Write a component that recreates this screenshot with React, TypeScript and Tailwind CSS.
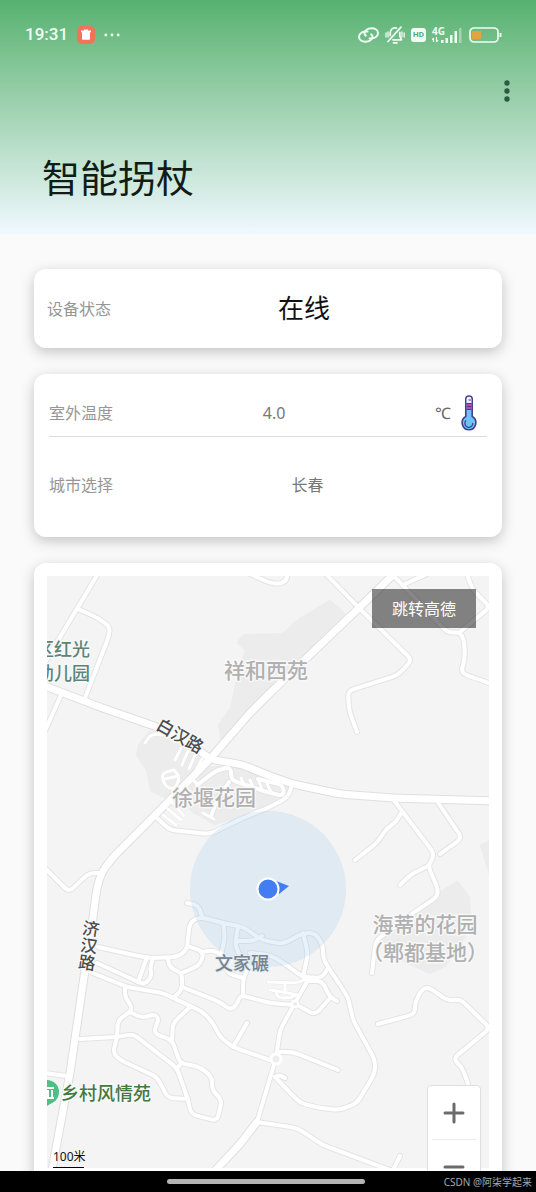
import type { ReactNode } from 'react';

const text = "font-['Noto_Sans','Noto_Sans_CJK_SC',sans-serif]";

// Built-up blocks, drawn under the roads
const blocks = [
  '330,602 344,615 303,660 260,707 222,739 220,725 232,708 238,680 247,650 239,642 245,636 283,635 300,620',
  '140,745 150,733 167,733 195,748 207,758 172,800 152,790 148,770 138,755',
  '207,768 240,768 270,778 288,788 284,798 250,812 215,823 195,812 182,800',
  '457,883 468,898 470,927 445,965 430,972 403,960 384,940 400,925 427,902',
  '482,846 490,842 490,872',
];

const mainRoads = [
  '40,684 97,706 157,727 187,741 210,759 243,765 270,776 293,784 340,794 393,798 495,801',
  '396,572 359,608 270,693 250,713 210,759 168,802 113,857 102,872 97,887 92,925 85,970 70,1073 51,1175',
  '257,1122 240,1144 212,1174',
];

const roads = [
  '99,572 78,607 57,642 44,664',
  '78,609 98,618 110,627 109,636 85,698',
  '61,695 44,733',
  '44,867 69,892 89,873 102,873',
  '324,572 359,608 412,660 398,675 348,691 349,710 357,732',
  '390,572 448,633 460,632 464,640 465,657 461,673 494,685',
  '405,584 427,574',
  '466,572 473,590 490,607 460,632',
  '248,573 270,583 280,584 287,580 287,572',
  '393,799 433,852 433,858 428,866 438,889 437,897 410,915 392,929 376,940 372,973',
  '402,812 395,823 387,828 377,843 355,860',
  '428,866 410,875 400,885',
  '437,801 462,838 440,854',
  '187,903 198,905 202,916',
  '98,947 143,957 153,958 177,957 187,950 188,938 190,922 200,917 223,923 243,927 262,940 283,944 303,933 315,933 323,945 323,958 328,967 348,997 353,1020 375,1060 375,1073 357,1103 340,1110 320,1108 300,1103 275,1077',
  '303,933 308,953 303,977',
  '223,923 225,937 221,955',
  '238,927 235,945 247,970',
  '237,941 253,941 262,936',
  '243,978 227,973 222,955 213,950 203,952',
  '250,953 270,955 282,962 303,977 322,978 328,968',
  '308,981 322,981 330,997 337,1001',
  '330,998 315,1015 297,1005',
  '308,980 295,1003 280,1030 276,1058 257,1122',
  '257,1122 297,1128 323,1145 395,1172',
  '400,1156 392,1172',
  '277,1052 293,1052 338,1070',
  '270,1060 233,1047 220,1037 213,1023 203,1012 190,1006 163,993 127,987 88,971',
  '233,1047 247,1023',
  '97,963 145,985 152,975 150,968 153,958',
  '147,957 138,982',
  '168,959 170,968 182,973 182,990 173,998',
  '182,973 200,965 204,952 188,946',
  '182,987 220,1002 230,1010 237,1005 240,995 270,1003 295,1005',
  '243,995 243,980 247,970',
  '125,988 125,997 132,1007 130,1012 118,1020 117,1037 113,1053 120,1060 157,1077 168,1098 188,1099',
  '80,1039 117,1037 133,1034 177,1068 188,1100 191,1114 217,1121 222,1100 212,1090 212,1077 200,1067 180,1063 172,1040 155,1034 155,1027 159,1020 155,1014 142,1018 130,1012',
  '172,1040 173,1023 190,1007',
  '176,1069 181,1064',
  '275,1077 279,1075 285,1078',
  '44,1073 67,1076',
  '378,1024 415,1014 415,1002 423,988 430,988 448,1001 460,999 490,1028 453,1059 462,1067 468,1084',
  '157,818 170,830 210,834 243,818 270,807 288,797 292,785',
  '197,785 217,770 231,767 231,780 270,793 284,796 283,785 258,779',
  '229,782 217,800 211,816',
];

const lanes = [
  '145,743 151,734 162,735',
  '181,748 175,760',
  '188,751 182,765',
  '195,755 189,769',
  '202,759 194,774',
  '174,770 162,773 163,782 168,788 175,789 180,777 174,770',
  '165,779 178,776',
  '163,815 176,825',
  '168,809 181,820',
  '173,803 184,816',
  '203,813 214,819',
  '190,778 199,785',
  '241,778 244,784',
  '250,780 253,787',
  '259,781 262,790',
  '267,784 271,792',
  '268,982 297,983 306,979',
  '270,990 283,992 297,995',
  '285,984 285,992',
  '276,992 278,998 290,998 296,995',
];

const CORNER = 6;

// Turns "x,y x,y ..." into a path whose corners are rounded off
function roadPath(line: string) {
  const pts = line.split(' ').map((p) => p.split(',').map(Number));
  const towards = (a: number[], b: number[]) => {
    const len = Math.hypot(b[0] - a[0], b[1] - a[1]) || 1;
    const t = Math.min(CORNER, len / 2) / len;
    return `${a[0] + (b[0] - a[0]) * t} ${a[1] + (b[1] - a[1]) * t}`;
  };
  let d = `M${pts[0].join(' ')}`;
  for (let i = 1; i < pts.length - 1; i++) {
    d += ` L${towards(pts[i], pts[i - 1])} Q${pts[i].join(' ')} ${towards(pts[i], pts[i + 1])}`;
  }
  return `${d} L${pts[pts.length - 1].join(' ')}`;
}

function RoadLayer({ lines, width, color }: { lines: string[]; width: number; color: string }) {
  return (
    <g fill="none" stroke={color} strokeWidth={width} strokeLinecap="round" strokeLinejoin="round">
      {lines.map((line) => (
        <path key={line} d={roadPath(line)} />
      ))}
    </g>
  );
}

function MapView() {
  return (
    <svg
      viewBox="47 576 442 592"
      className="block w-full bg-[#f4f4f4] font-['Noto_Sans_CJK_SC',sans-serif] font-medium"
      role="img"
      aria-label="地图"
    >
      {blocks.map((points) => (
        <polygon key={points} points={points} fill="#ececec" stroke="#ececec" strokeWidth="4" strokeLinejoin="round" />
      ))}
      <RoadLayer lines={lanes} width={4} color="#e6e6e6" />
      <RoadLayer lines={roads} width={6} color="#e4e4e4" />
      <RoadLayer lines={mainRoads} width={9} color="#dfdfdf" />
      <RoadLayer lines={lanes} width={3} color="#fff" />
      <RoadLayer lines={roads} width={4} color="#fff" />
      <RoadLayer lines={mainRoads} width={7} color="#fff" />
      <circle cx="276" cy="1059" r="5" fill="#ededed" stroke="#fff" strokeWidth="3" />
      <circle cx="295" cy="1004" r="3" fill="#ededed" stroke="#fff" strokeWidth="2" />

      <circle cx="268" cy="889" r="78" fill="#9fcbee" fillOpacity="0.25" />

      <g stroke="#f8f8f8" strokeWidth="3" strokeLinejoin="round" paintOrder="stroke">
        <g fontSize="21" fill="#b0b0b0" textAnchor="middle">
          <text x="266" y="678">祥和西苑</text>
          <text x="214" y="805">徐堰花园</text>
          <text x="425" y="932">海蒂的花园</text>
          <text x="425" y="960">（郫都基地）</text>
        </g>
        <g fontSize="18" fill="#5b8577">
          <text x="36" y="656">区红光</text>
          <text x="36" y="680">幼儿园</text>
        </g>
        <text x="215" y="970" fontSize="18" fill="#77858f" stroke="#e4edf5" strokeWidth="2">
          文家碾
        </text>
        <g fontSize="17" fill="#4c4c4c" textAnchor="middle">
          <text transform="translate(180 736) rotate(30)" y="6">白汉路</text>
          <text transform="translate(91 929) rotate(8)" y="6">济</text>
          <text transform="translate(89 946) rotate(8)" y="6">汉</text>
          <text transform="translate(87 963) rotate(8)" y="6">路</text>
        </g>
        <text x="61" y="1100" fontSize="18" fill="#44783f">乡村风情苑</text>
      </g>

      <path d="M47 1106l9-6-9-3z" fill="#4dc084" />
      <circle cx="47" cy="1092" r="12" fill="#4dc084" />
      <path d="M40 1088h14M48 1090v7M52 1090v7M40 1098h14" stroke="#fff" strokeWidth="2" />

      <path d="M276 881l13 5-10 8z" fill="#437df3" />
      <circle cx="268" cy="889" r="10.500" fill="#437df3" stroke="#fff" strokeWidth="2" />

      <text x="53" y="1161" fontSize="12" fill="#111" className="font-['Noto_Sans','Noto_Sans_CJK_SC',sans-serif] font-normal">
        100米
      </text>
      <path d="M53 1167.5h31" stroke="#000" />
    </svg>
  );
}

function StatusBar() {
  return (
    <div className="flex h-[69px] items-center justify-between pr-[34px] pl-[25px] text-[#effdf3]">
      <div className="flex items-center gap-[9px]">
        <span className="font-['Roboto',sans-serif] text-[17px] font-medium">19:31</span>
        <svg width="18" height="18" viewBox="0 0 18 18">
          <rect width="18" height="18" rx="5" fill="#f1735a" />
          <path d="M4 4.500h3V3.500h4v1h3v1.800H4zM5 6.300h8v6.700q0 .8-.8.8H5.800q-.8 0-.8-.8z" fill="#fff" />
        </svg>
        <svg width="16" height="4" viewBox="0 0 16 4" fill="currentColor">
          <circle cx="1.800" cy="2" r="1.400" />
          <circle cx="8" cy="2" r="1.400" />
          <circle cx="14.200" cy="2" r="1.400" />
        </svg>
      </div>
      <div className="flex items-center gap-[6px]">
        <svg width="21" height="16" viewBox="0 0 21 16" fill="none" stroke="currentColor" strokeWidth="2" strokeLinecap="round">
          <path d="M9.500 4.600C4.500 4 1 6.500 1 9.800C1 13 4 14.800 7.500 14.800C11.500 14.800 14.500 12.500 14.500 9.800C14.500 8.800 14 8 13.200 7.400" />
          <path d="M11.500 11.400C16.500 12 20 9.500 20 6.200C20 3 17 1.200 13.500 1.200C9.500 1.200 6.500 3.500 6.500 6.200C6.500 7.200 7 8 7.800 8.600" />
        </svg>
        <svg width="20" height="18" viewBox="0 0 20 18" fill="none" stroke="currentColor" strokeWidth="1.800" strokeLinecap="round" strokeLinejoin="round">
          <path d="M11.500 2.200C8 1.200 5.200 3.500 5.200 7v2.500M14.800 6.500v3.500l1.700 3.800H8" />
          <path d="M3 15.500L16 1.200" />
          <path d="M8.500 16.800h3.500" />
          <path d="M1 7v4M3 6v5M17 6v5M19.200 7v4" strokeWidth="1.300" />
        </svg>
        <span className="flex h-[14px] w-[15px] items-center justify-center rounded-[3px] bg-[#effdf3] font-['Roboto',sans-serif] text-[8px] font-bold text-[#5aa876]">
          HD
        </span>
        <div className="relative">
          <svg width="31" height="16" viewBox="0 0 31 16" fill="currentColor">
            <path d="M1.500 11v4M4.500 10v5M0 13l1.500-2M4.500 15l1.500-2" stroke="currentColor" strokeWidth="1.200" />
            <rect x="9" y="13" width="2.500" height="3" />
            <rect x="13.500" y="11" width="2.500" height="5" />
            <rect x="18" y="8" width="2.500" height="8" />
            <rect x="22.500" y="4" width="2.500" height="12" />
            <rect x="27" y="1" width="2.500" height="15" opacity="0.4" />
          </svg>
          <span className="absolute top-[-1px] left-0 font-['Noto_Sans',sans-serif] text-[10px] leading-[10px] font-bold">
            4G
          </span>
        </div>
        <svg width="33" height="16" viewBox="0 0 33 16">
          <rect x="1" y="1" width="28" height="14" rx="4" fill="none" stroke="currentColor" strokeWidth="1.700" />
          <rect x="3" y="4" width="9" height="8" fill="#dfa63d" />
          <path d="M31.500 6v4" stroke="currentColor" strokeWidth="2" />
        </svg>
      </div>
    </div>
  );
}

function Thermometer() {
  return (
    <svg width="16" height="36" viewBox="0 0 16 36" aria-hidden="true">
      <path
        d="M4.800 4C4.800 0 11.200 0 11.200 4V21.500C17.500 25 15 34.800 8 34.800C1 34.800 -1.500 25 4.800 21.500Z"
        fill="#6cc3f8"
        stroke="#45418c"
        strokeWidth="1.600"
      />
      <path d="M5.600 4C5.600 1 10.400 1 10.400 4V8H5.600z" fill="#f5efff" />
      <path d="M5.600 8h4.800v6.500H5.600z" fill="#b14fb5" />
      <path d="M7.500 5H10M5.600 8.500h4.800M5.600 11.500h4.800M5.600 14.500h4.800" stroke="#5b3289" />
      <path d="M5 25.500A4 4 0 1 0 11.800 28" fill="none" stroke="#45418c" strokeWidth="1.300" />
    </svg>
  );
}

function Card({ className, children }: { className: string; children: ReactNode }) {
  return (
    <section className={`shrink-0 rounded-xl bg-white shadow-[0_4px_14px_rgba(0,0,0,0.22)] ${className}`}>
      {children}
    </section>
  );
}

export default function App() {
  return (
    <div className={`flex h-screen flex-col overflow-hidden bg-[#fafafa] ${text}`}>
      <header className="shrink-0 bg-linear-to-b from-[#55b16f] to-[#f0f8ff] pb-[29px]">
        <StatusBar />
        <div className="flex h-11 items-center justify-end pr-[17px]">
          <button type="button" aria-label="更多" className="flex h-10 w-6 items-center justify-center">
            <svg width="6" height="22" viewBox="0 0 6 22" fill="#2b5a40">
              <circle cx="3" cy="3" r="2.700" />
              <circle cx="3" cy="11" r="2.700" />
              <circle cx="3" cy="19" r="2.700" />
            </svg>
          </button>
        </div>
        <h1 className="mt-9 pl-[42px] text-[38px] leading-[56px] text-[#101c15]">智能拐杖</h1>
      </header>

      <main className="flex flex-1 flex-col gap-[26px] overflow-hidden px-[34px] pt-[35px]">
        <Card className="flex h-[79px] items-center pr-[5px] pl-[13px]">
          <span className="text-base text-[#969696]">设备状态</span>
          <span className="flex-1 text-center text-[26px] text-[#111]">在线</span>
        </Card>

        <Card className="pt-4 pb-1 pl-[15px]">
          <div className="mr-[15px] flex h-[47px] items-center border-b border-[#dcdcdc]">
            <span className="text-base text-[#969696]">室外温度</span>
            <span className="flex-1 text-center text-base text-[#777]">4.0</span>
            <span className="mr-[10px] text-base text-[#666]">℃</span>
            <div className="mr-[10px]">
              <Thermometer />
            </div>
          </div>
          <div className="flex h-24 items-center">
            <label htmlFor="city" className="text-base text-[#969696]">
              城市选择
            </label>
            <select
              id="city"
              defaultValue="长春"
              className="h-10 flex-1 appearance-none bg-transparent text-center text-base text-[#777] [text-align-last:center]"
            >
              <option>长春</option>
            </select>
          </div>
        </Card>

        <Card className="p-[13px]">
          <div className="relative">
            <MapView />
            <button type="button" className="absolute top-[13px] right-[13px] h-[39px] bg-black/47 px-5 text-base text-white">
              跳转高德
            </button>
            <div className="absolute right-2 bottom-[-27px] w-[54px] rounded-sm border border-[#dedede] bg-white px-1">
              <button type="button" aria-label="放大" className="flex h-[54px] w-full items-center justify-center border-b border-[#ececec]">
                <svg width="22" height="22" viewBox="0 0 22 22" stroke="#6b6b6b" strokeWidth="3" strokeLinecap="round">
                  <path d="M11 2v18M2 11h18" />
                </svg>
              </button>
              <button type="button" aria-label="缩小" className="flex h-[54px] w-full items-center justify-center">
                <svg width="22" height="22" viewBox="0 0 22 22" stroke="#6b6b6b" strokeWidth="3" strokeLinecap="round">
                  <path d="M2 11h18" />
                </svg>
              </button>
            </div>
          </div>
        </Card>
      </main>

      <footer className="grid h-[21px] shrink-0 grid-cols-[1fr_auto_1fr] items-center bg-black pr-1">
        <span />
        <span className="h-[5px] w-[198px] rounded-full bg-[#b4b4b4]" />
        <span className="text-right text-[10px] leading-4 text-[#a8a8a8]">CSDN @阿柒学起来</span>
      </footer>
    </div>
  );
}
